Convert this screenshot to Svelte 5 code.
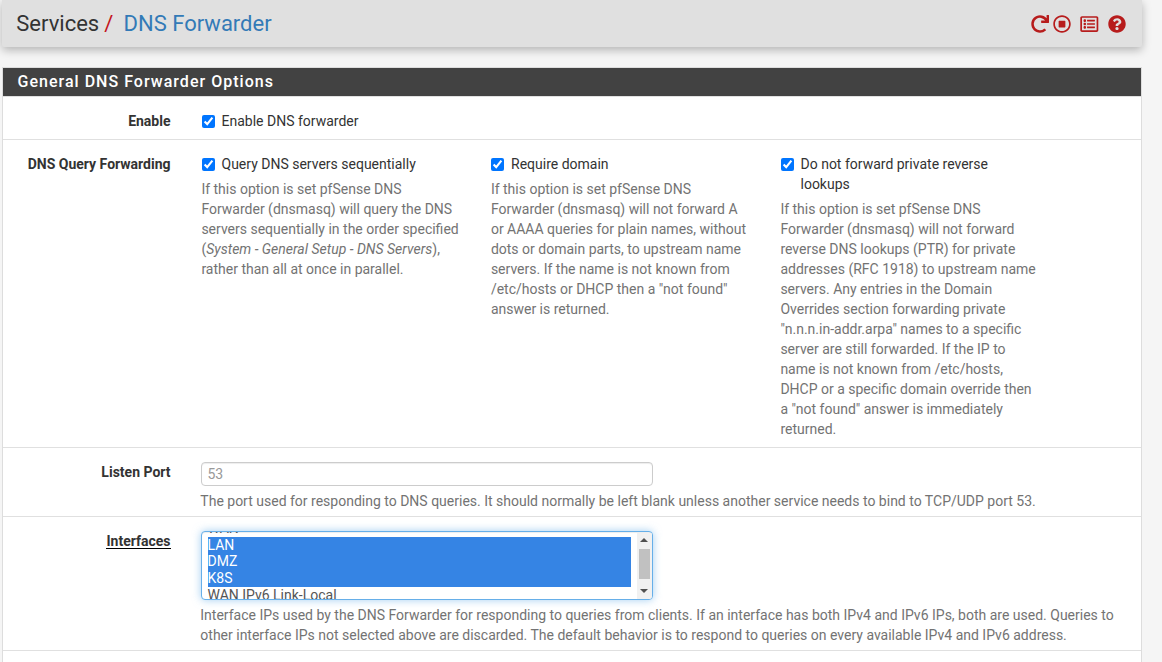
<script>
  const icons = [
    {
      label: 'Restart service',
      gap: 0,
      width: 18,
      d: 'M500.33 0h-47.41a12 12 0 0 0-12 12.57l4 82.76A247.42 247.42 0 0 0 256 8C119.34 8 7.9 119.53 8 256.19 8.1 393.07 119.1 504 256 504a247.1 247.1 0 0 0 166.18-63.91 12 12 0 0 0 .48-17.43l-34-34a12 12 0 0 0-16.38-.55A176 176 0 1 1 402.1 157.8l-101.53-4.87a12 12 0 0 0-12.57 12v47.41a12 12 0 0 0 12 12h200.33a12 12 0 0 0 12-12V12a12 12 0 0 0-12-12z'
    },
    {
      label: 'Stop service',
      gap: 3.5,
      width: 18,
      d: 'M504 256C504 119 393 8 256 8S8 119 8 256s111 248 248 248 248-111 248-248zm-448 0c0-110.500 89.500-200 200-200s200 89.500 200 200-89.500 200-200 200S56 366.500 56 256zm296-80v160c0 8.800-7.200 16-16 16H176c-8.800 0-16-7.200-16-16V176c0-8.800 7.200-16 16-16h160c8.800 0 16 7.200 16 16z'
    },
    {
      label: 'Logs',
      gap: 9.5,
      width: 18.600,
      d: 'M464 32H48C21.490 32 0 53.490 0 80v352c0 26.510 21.490 48 48 48h416c26.510 0 48-21.490 48-48V80c0-26.510-21.490-48-48-48zm-6 400H54a6 6 0 0 1-6-6V86a6 6 0 0 1 6-6h404a6 6 0 0 1 6 6v340a6 6 0 0 1-6 6zm-42-92v24c0 6.627-5.373 12-12 12H204c-6.627 0-12-5.373-12-12v-24c0-6.627 5.373-12 12-12h200c6.627 0 12 5.373 12 12zm0-96v24c0 6.627-5.373 12-12 12H204c-6.627 0-12-5.373-12-12v-24c0-6.627 5.373-12 12-12h200c6.627 0 12 5.373 12 12zm0-96v24c0 6.627-5.373 12-12 12H204c-6.627 0-12-5.373-12-12v-24c0-6.627 5.373-12 12-12h200c6.627 0 12 5.373 12 12zm-252 12c0 19.882-16.118 36-36 36s-36-16.118-36-36 16.118-36 36-36 36 16.118 36 36zm0 96c0 19.882-16.118 36-36 36s-36-16.118-36-36 16.118-36 36-36 36 16.118 36 36zm0 96c0 19.882-16.118 36-36 36s-36-16.118-36-36 16.118-36 36-36 36 16.118 36 36z'
    },
    {
      label: 'Help',
      gap: 9.5,
      width: 18,
      d: 'M504 256c0 136.997-111.043 248-248 248S8 392.997 8 256C8 119.083 119.043 8 256 8s248 111.083 248 248zM262.655 90c-54.497 0-89.255 22.957-116.549 63.758-3.536 5.286-2.353 12.415 2.715 16.258l34.699 26.310c5.205 3.947 12.621 3.008 16.665-2.122 17.864-22.658 30.113-35.797 57.303-35.797 20.429 0 45.698 13.148 45.698 32.958 0 14.976-12.363 22.667-32.534 33.976C247.128 238.528 216 254.941 216 296v4c0 6.627 5.373 12 12 12h56c6.627 0 12-5.373 12-12v-1.333c0-28.462 83.186-29.647 83.186-106.667 0-58.002-60.165-102-116.531-102zM256 338c-25.365 0-46 20.635-46 46 0 25.364 20.635 46 46 46s46-20.636 46-46c0-25.364-20.635-46-46-46z'
    }
  ];
</script>

<div class="page">
  <header>
    <h1><span>Services</span><span class="slash">/</span><a href="#top">DNS Forwarder</a></h1>
    <nav>
      {#each icons as icon}
        <svg viewBox="0 0 512 512" aria-label={icon.label} style:margin-left="{icon.gap}px" style:width="{icon.width}px"><path d={icon.d} /></svg>
      {/each}
    </nav>
  </header>

  <section class="panel">
    <h2>General DNS Forwarder Options</h2>

    <div class="row enable">
      <div class="label">Enable</div>
      <label class="check"><input type="checkbox" checked /><span>Enable DNS forwarder</span></label>
    </div>

    <div class="row query">
      <div class="label">DNS Query Forwarding</div>
      <div class="columns">
        <div>
          <label class="check"><input type="checkbox" checked /><span>Query DNS servers sequentially</span></label>
          <p>If this option is set pfSense DNS<br />Forwarder (dnsmasq) will query the DNS<br />servers sequentially in the order specified<br />(<i>System - General Setup - DNS Servers</i>),<br />rather than all at once in parallel.</p>
        </div>
        <div>
          <label class="check"><input type="checkbox" checked /><span>Require domain</span></label>
          <p>If this option is set pfSense DNS<br />Forwarder (dnsmasq) will not forward A<br />or AAAA queries for plain names, without<br />dots or domain parts, to upstream name<br />servers. If the name is not known from<br />/etc/hosts or DHCP then a "not found"<br />answer is returned.</p>
        </div>
        <div>
          <label class="check"><input type="checkbox" checked /><span>Do not forward private reverse<br />lookups</span></label>
          <p>If this option is set pfSense DNS<br />Forwarder (dnsmasq) will not forward<br />reverse DNS lookups (PTR) for private<br />addresses (RFC 1918) to upstream name<br />servers. Any entries in the Domain<br />Overrides section forwarding private<br />"n.n.n.in-addr.arpa" names to a specific<br />server are still forwarded. If the IP to<br />name is not known from /etc/hosts,<br />DHCP or a specific domain override then<br />a "not found" answer is immediately<br />returned.</p>
        </div>
      </div>
    </div>

    <div class="row port">
      <div class="label">Listen Port</div>
      <div class="field">
        <input class="text" type="text" placeholder="53" />
        <p>The port used for responding to DNS queries. It should normally be left blank unless another service needs to bind to TCP/UDP port 53.</p>
      </div>
    </div>

    <div class="row interfaces">
      <div class="label"><span class="required">Interfaces</span></div>
      <div class="field">
        <div class="listbox">
          <div class="options">
            <div class="option">WAN</div>
            <div class="option selected">LAN</div>
            <div class="option selected">DMZ</div>
            <div class="option selected tall">K8S</div>
            <div class="option">WAN IPv6 Link-Local</div>
          </div>
          <div class="scrollbar">
            <svg class="arrow" viewBox="0 0 8 4"><path d="M0 4 4 0l4 4z" /></svg>
            <div class="thumb"></div>
            <svg class="arrow" viewBox="0 0 8 4"><path d="M0 0h8L4 4z" /></svg>
          </div>
        </div>
        <p>Interface IPs used by the DNS Forwarder for responding to queries from clients. If an interface has both IPv4 and IPv6 IPs, both are used. Queries to<br />other interface IPs not selected above are discarded. The default behavior is to respond to queries on every available IPv4 and IPv6 address.</p>
      </div>
    </div>
    <div class="row rest"></div>
  </section>
</div>

<style>
  :global(body) { background: #f5f5f5; }
  .page {
    box-sizing: border-box;
    width: 1162px;
    height: 662px;
    padding: 0 20px 0 2px;
    overflow: hidden;
    font: 14px/20px Roboto, sans-serif;
    color: #333;
    background: #f5f5f5;
  }
  header {
    display: flex;
    justify-content: space-between;
    box-sizing: border-box;
    height: 47px;
    padding: 0 15.7px 0 14.3px;
    background: #e0e0e0;
    border-radius: 0 0 2px 2px;
    box-shadow: 0 3px 10px rgba(0, 0, 0, 0.28);
  }
  h1 { display: flex; margin: 11px 0 0; font-size: 22px; line-height: 26px; font-weight: 400; }
  .slash { margin: 0 10.3px 0 5px; color: #c4161c; }
  a { color: #337ab7; text-decoration: none; }
  nav { display: flex; padding-top: 15px; }
  nav svg { display: block; height: 18px; fill: #b71c1c; }
  .panel {
    box-sizing: border-box;
    height: 640px;
    margin-top: 20px;
    background: #fff;
    border: 1px solid #ddd;
  }
  h2 {
    height: 28px;
    margin: 0;
    padding-left: 14.5px;
    font-size: 16px;
    line-height: 27px;
    font-weight: 500;
    letter-spacing: 1.02px;
    color: #fff;
    background: #424242;
  }
  .row { display: flex; box-sizing: border-box; border-top: 1px solid #e0e0e0; }
  .enable { height: 43px; padding-top: 14px; }
  .query { height: 308px; padding-top: 14px; }
  .port { height: 69px; padding-top: 14px; }
  .interfaces { height: 134px; padding-top: 14px; }
  .label { flex: none; width: 167.5px; margin-right: 30px; text-align: right; font-weight: 700; }
  .required { display: inline-block; height: 17px; border-bottom: 1px solid #000; }
  .check { display: flex; padding-left: 1px; }
  .check input { flex: none; width: 13px; height: 13px; margin: 4px 7px 0 0; }
  .columns { display: flex; }
  .columns > div { width: 289.5px; }
  p { margin: 0; color: #737373; white-space: nowrap; }
  .columns p { margin: 5px 0 0 0.9px; }
  .field p { margin-left: -0.2px; }
  .text {
    display: block;
    box-sizing: border-box;
    width: 452px;
    height: 24px;
    margin: 0 0 5px;
    padding: 0 6px;
    font: 14px/20px Roboto, sans-serif;
    border: 1px solid #ccc;
    border-radius: 4px;
    box-shadow: inset 0 1px 1px rgba(0, 0, 0, 0.075);
  }
  .text::placeholder { color: #999; }
  .listbox {
    display: flex;
    box-sizing: border-box;
    width: 452px;
    height: 69px;
    margin-bottom: 5px;
    overflow: hidden;
    background: #fff;
    border: 1px solid #66afe9;
    border-radius: 4px;
    box-shadow: inset 0 1px 1px rgba(0, 0, 0, 0.075), 0 0 8px rgba(102, 175, 233, 0.6);
  }
  .options { width: 423px; margin: -12px 6px 0; color: #555; }
  .option { height: 17px; line-height: 17px; white-space: nowrap; }
  .selected { height: 16px; line-height: 17px; color: #fff; background: #3584e4; }
  .tall { height: 18px; line-height: 18px; }
  .scrollbar {
    display: flex;
    flex-direction: column;
    align-items: center;
    box-sizing: border-box;
    width: 15px;
    height: 66px;
    margin-top: 1px;
    padding: 5px 0;
    background: #f1f1f1;
  }
  .arrow { width: 8px; height: 4px; fill: #505050; }
  .thumb { width: 11px; height: 30px; margin: 7px 0 10px; background: #c1c1c1; }
</style>
